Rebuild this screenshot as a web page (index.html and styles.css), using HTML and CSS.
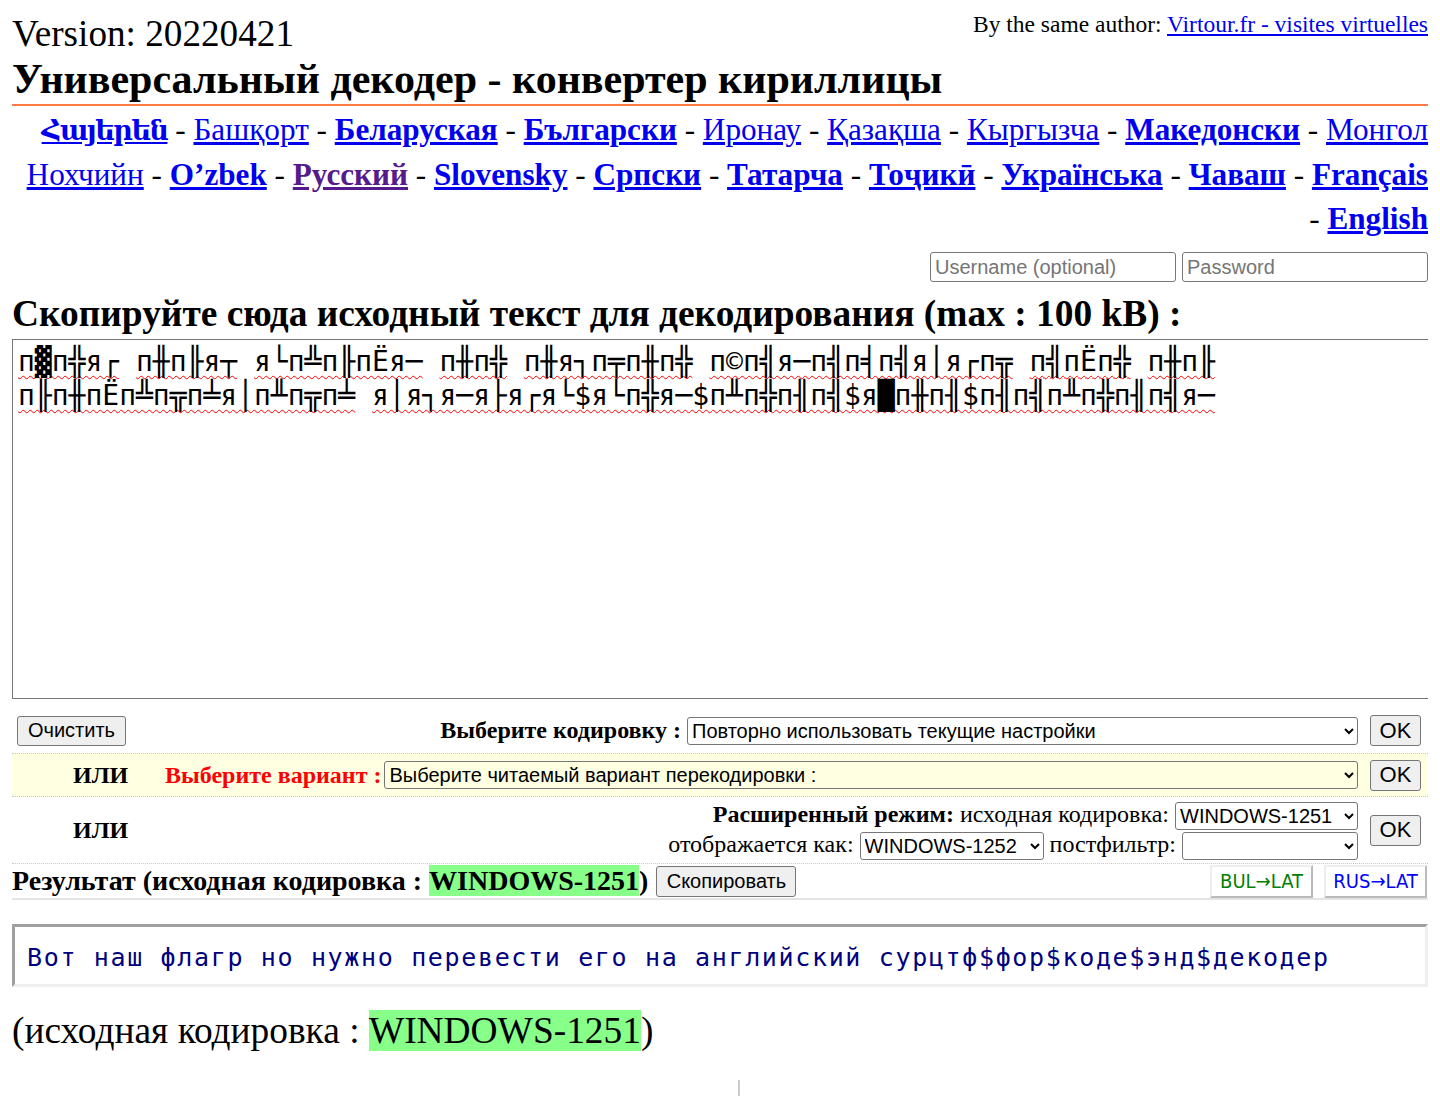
FILE: index.html
```html
<!DOCTYPE html>
<html lang="ru">
<head>
<meta charset="utf-8">
<title>Универсальный декодер - конвертер кириллицы</title>
<link rel="stylesheet" href="styles.css">
</head>
<body>
<header class="top">
  <div class="top-line">
    <div class="version">Version: 20220421</div>
    <div class="author">By the same author: <a href="#">Virtour.fr - visites virtuelles</a></div>
  </div>
  <h1 class="title">Универсальный декодер - конвертер кириллицы</h1>
</header>
<nav class="langs">
  <a class="b hy" href="#" lang="hy">Հայերեն</a> - <a href="#">Башқорт</a> - <a class="b" href="#">Беларуская</a> - <a class="b" href="#">Български</a> - <a href="#">Иронау</a> - <a href="#">Қазақша</a> - <a href="#">Кыргызча</a> - <a class="b" href="#">Македонски</a> - <a href="#">Монгол</a><br>
  <a href="#">Нохчийн</a> - <a class="b" href="#">O’zbek</a> - <a class="b visited" href="#">Русский</a> - <a class="b" href="#">Slovensky</a> - <a class="b" href="#">Српски</a> - <a class="b" href="#">Татарча</a> - <a class="b" href="#">Тоҷикӣ</a> - <a class="b" href="#">Українська</a> - <a class="b" href="#">Чаваш</a> - <a class="b" href="#">Français</a><br>
  - <a class="b" href="#">English</a>
</nav>
<form class="login">
  <input type="text" placeholder="Username (optional)">
  <input type="password" placeholder="Password">
</form>
<h2 class="prompt">Скопируйте сюда исходный текст для декодирования (max : 100 kB) :</h2>
<div class="source" role="textbox" aria-multiline="true"><span class="sp">п▓п╬я┌</span> <span class="sp">п╫п╟я┬</span> <span class="sp">я└п╩п╟пЁя─</span> <span class="sp">п╫п╬</span> <span class="sp">п╫я┐п╤п╫п╬</span> <span class="sp">п©п╣я─п╣п╡п╣я│я┌п╦</span> <span class="sp">п╣пЁп╬</span> <span class="sp">п╫п╟</span> <span class="sp">п╟п╫пЁп╩п╦п╧я│п╨п╦п╧</span> <span class="sp">я│я┐я─я├я┌я└$я└п╬я─$п╨п╬п╢п╣$я█п╫п╢$п╢п╣п╨п╬п╢п╣я─</span></div>

<div class="controls">
  <div class="row row1">
    <div class="lead"><button class="btn" type="button">Очистить</button></div>
    <div class="main main-right">
      <span class="label">Выберите кодировку :</span>
      <select class="sel sel-enc"><option>Повторно использовать текущие настройки</option></select>
    </div>
    <button class="btn ok" type="button">OK</button>
  </div>

  <div class="row row2">
    <div class="lead ili">ИЛИ</div>
    <div class="main">
      <span class="label red">Выберите вариант :</span>
      <select class="sel sel-var"><option>Выберите читаемый вариант перекодировки :</option></select>
    </div>
    <button class="btn ok" type="button">OK</button>
  </div>

  <div class="row row3">
    <div class="lead ili">ИЛИ</div>
    <div class="main adv">
      <div class="adv-line"><b>Расширенный режим:</b> исходная кодировка: <select class="sel sel-1251"><option>WINDOWS-1251</option></select></div>
      <div class="adv-line">отображается как: <select class="sel sel-1252"><option>WINDOWS-1252</option></select> постфильтр: <select class="sel sel-post"><option></option></select></div>
    </div>
    <button class="btn ok" type="button">OK</button>
  </div>

  <div class="row row4">
    <div class="res">Результат (исходная кодировка : <span class="hl">WINDOWS-1251</span>)</div>
    <button class="btn copy" type="button">Скопировать</button>
    <div class="translit">
      <button class="tr bul" type="button">BUL→LAT</button>
      <button class="tr rus" type="button">RUS→LAT</button>
    </div>
  </div>
</div>

<div class="result-box">Вот наш флагр но нужно перевести его на английский сурцтф$фор$коде$энд$декодер</div>

<p class="result-enc">(исходная кодировка : <span class="hl">WINDOWS-1251</span>)</p>

<div class="tick"></div>
</body>
</html>
```

FILE: styles.css
```css
html {
  background: #fff;
}

body {
  margin: 12px;
  font-family: "Liberation Serif", "DejaVu Serif", serif;
  font-size: 24px;
  color: #000;
}

a {
  color: #0000ee;
}

/* header */
.top-line {
  display: flex;
  justify-content: space-between;
  align-items: flex-start;
}

.version {
  font-size: 37.2px;
}

.author {
  font-size: 23.5px;
  line-height: 24px;
}

.title {
  margin: 0;
  padding-bottom: 1px;
  font-size: 42px;
  font-weight: bold;
  border-bottom: 2px solid #ff7a45;
}

/* languages */
.langs {
  padding-top: 2px;
  text-align: right;
  font-size: 31.2px;
  line-height: 44px;
}

.langs .b {
  font-weight: bold;
}

.langs .hy {
  font-size: 27px;
  letter-spacing: -1.5px;
}

.langs .visited {
  color: #551a8b;
}

/* login */
.login {
  display: flex;
  justify-content: flex-end;
  gap: 6px;
  margin: 11px 0 0;
}

.login input {
  box-sizing: border-box;
  width: 246px;
  height: 30px;
  padding: 1px 4px;
  font: 20px "Liberation Sans", Arial, sans-serif;
  border: 1px solid #767676;
  border-radius: 3px;
}

.login input::placeholder {
  color: #757575;
}

.prompt {
  margin: 10px 0 4px;
  font-size: 37.4px;
  font-weight: bold;
}

/* source textarea */
.source {
  width: 100%;
  height: 352px;
  padding: 5px 3px 1px 5px;
  border: 1px solid #767676;
  font-family: "DejaVu Sans Mono", monospace;
  font-size: 28px;
  line-height: 34px;
  white-space: pre-wrap;
  overflow: auto;
  resize: vertical;
}

.sp {
  text-decoration: underline wavy #f00;
  text-decoration-thickness: 1px;
  text-underline-offset: 4px;
  text-decoration-skip-ink: none;
}

/* controls */
.controls {
  margin-top: 15px;
}

.row {
  display: flex;
  align-items: center;
  padding-right: 7px;
}

.lead {
  flex: none;
  width: 153px;
  box-sizing: border-box;
}

.main {
  flex: 1;
  display: flex;
  align-items: center;
  min-width: 0;
}

.main-right {
  justify-content: flex-end;
}

.label {
  font-weight: bold;
  margin-right: 6px;
  white-space: nowrap;
}

.red {
  color: #ff0000;
  margin-right: 3px;
}

.ili {
  padding-left: 61px;
  font-weight: bold;
}

.btn {
  height: 31px;
  padding: 0 11px;
  font: 20px "Liberation Sans", Arial, sans-serif;
  color: #000;
  background: #efefef;
  border: 1px solid #767676;
  border-radius: 3px;
}

.ok {
  flex: none;
  margin-left: 12px;
  width: 51px;
  padding: 0;
  font-size: 22px;
}

.sel {
  height: 28px;
  font: 20px "Liberation Sans", Arial, sans-serif;
  color: #000;
  background-color: #fff;
  border: 1px solid #767676;
  border-radius: 3px;
  vertical-align: middle;
}

.row1 {
  padding-top: 1px;
  padding-bottom: 4px;
}

.row1 .lead {
  padding-left: 5px;
}

.row1 .btn:not(.ok) {
  height: 30px;
  width: 109px;
  padding: 0;
}

.sel-enc {
  width: 671px;
}

.row2 {
  height: 42px;
  margin-top: 3px;
  background: #ffffe2;
  border-top: 1px dotted #c8c8c8;
  border-bottom: 1px dotted #c8c8c8;
}

.sel-var {
  flex: 1;
  background-color: #ffffe2;
}

.row3 {
  height: 66px;
  border-bottom: 1px dotted #c8c8c8;
}

.adv {
  display: block;
  text-align: right;
}

.adv-line {
  line-height: 29px;
}

.sel-1251 {
  width: 183px;
}

.sel-1252 {
  width: 184px;
}

.sel-post {
  width: 176px;
}

.row4 {
  height: 34px;
  padding-right: 1px;
  border-bottom: 2px solid #e4e4e4;
}

.res {
  font-size: 28px;
  font-weight: bold;
  white-space: nowrap;
}

.copy {
  margin-left: 8px;
  width: 140px;
  padding: 0;
}

.translit {
  margin-left: auto;
  display: flex;
  gap: 11px;
}

.tr {
  width: 103px;
  height: 33px;
  padding: 0;
  font: 20px "DejaVu Sans Condensed", "DejaVu Sans", sans-serif;
  background: #fff;
  border: 2px solid;
  border-color: #eeeeee #bbbbbb #bbbbbb #eeeeee;
}

.bul {
  color: #008000;
}

.rus {
  color: #0000ff;
}

.hl {
  background: #88ff88;
}

/* result */
.result-box {
  margin-top: 24px;
  padding: 16px 12px 12px;
  border: 3px solid;
  border-color: #a0a0a0 #eeeeee #eeeeee #a0a0a0;
  font-family: "DejaVu Sans Mono", monospace;
  font-size: 25px;
  letter-spacing: 1.65px;
  color: #000080;
  white-space: nowrap;
}

.result-enc {
  margin: 22px 0 0;
  font-size: 37.4px;
}

.tick {
  margin: 28px 0 0 726px;
  width: 2px;
  height: 20px;
  background: #cccccc;
}
```
